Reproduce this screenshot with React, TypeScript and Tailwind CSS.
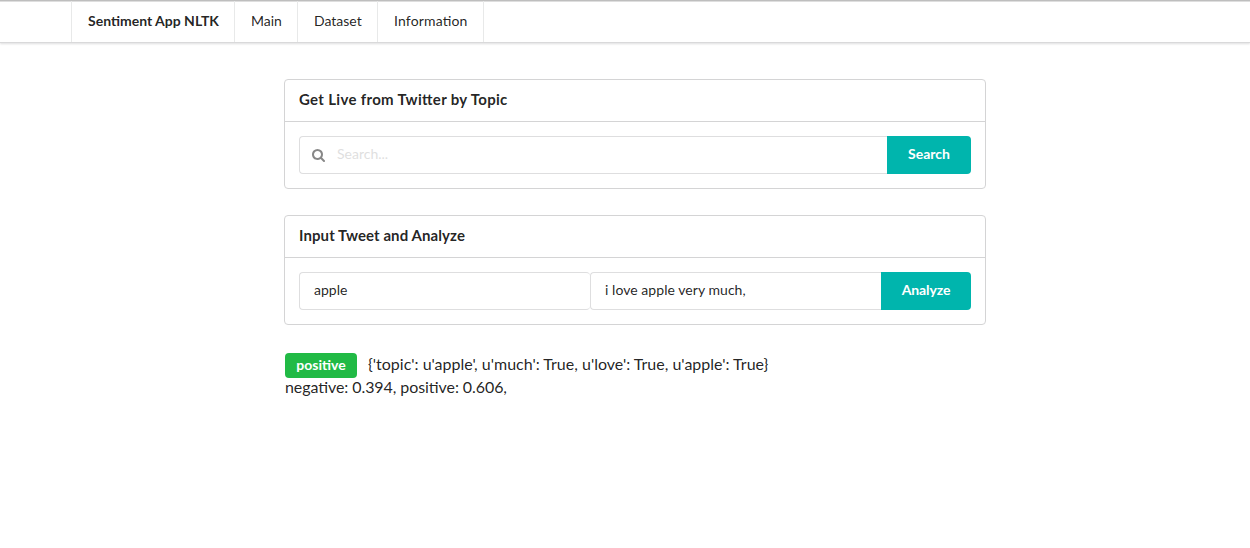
const items = [
  { label: "Main", box: "w-[63px]" },
  { label: "Dataset", box: "w-20" },
  { label: "Information", box: "w-[106px] tracking-[0.15px]" },
];

function SearchIcon() {
  return (
    <svg viewBox="0 128 1664 1664" className="size-[13px] shrink-0 fill-[#888]">
      <path d="M1152 832q0-185-131.5-316.5t-316.5-131.5-316.5 131.5-131.5 316.5 131.5 316.5 316.5 131.5 316.5-131.5 131.5-316.5zm512 832q0 52-38 90t-90 38q-54 0-90-38l-343-342q-179 124-399 124-143 0-273.5-55.5t-225-150-150-225-55.5-273.5 55.5-273.5 150-225 225-150 273.5-55.5 273.5 55.5 225 150 150 225 55.5 273.5q0 220-124 399l343 343q37 37 37 90z" />
    </svg>
  );
}

export default function App() {
  return (
    <div className="min-h-[548px] bg-white font-['Lato',sans-serif] text-[14px] text-[rgba(0,0,0,0.87)] [font-feature-settings:'liga'_1]">
      <nav className="flex h-[43px] border-t border-b border-t-[#bebebe] border-b-[#d9d9da] pl-[71px] shadow-[0_1px_2px_0_rgba(34,36,38,0.15),inset_0_1px_0_0_#dedede]">
        <div className="flex w-[164px] items-center whitespace-nowrap border-x border-[#e8e9e9] pb-0.5 pl-4 font-bold">Sentiment App NLTK</div>
        {items.map((item) => (
          <a key={item.label} className={`flex items-center border-r border-[#e8e9e9] pb-0.5 pl-4 ${item.box}`}>{item.label}</a>
        ))}
      </nav>
      <main className="ml-[284px] mt-9 w-[702px]">
        <section className="h-[110px] rounded border border-[#d4d4d5]">
          <h2 className="flex h-[42px] items-center border-b border-[#d4d4d5] px-[14px] pb-0.5 text-[15px] font-bold tracking-[0.32px]">Get Live from Twitter by Topic</h2>
          <div className="flex p-[14px]">
            <div className="flex h-[38px] flex-1 items-center rounded-l border border-r-0 border-[#dededf] pl-3">
              <SearchIcon />
              <span className="ml-3 pb-[3px] text-[#dfdfdf]">Search...</span>
            </div>
            <button className="h-[38px] w-[84px] rounded-r bg-[#00b5ad] pb-[3px] font-bold text-white">Search</button>
          </div>
        </section>
        <section className="mt-[26px] h-[110px] rounded border border-[#d4d4d5]">
          <h2 className="flex h-[42px] items-center border-b border-[#d4d4d5] px-[14px] pb-0.5 text-[15px] font-bold tracking-[0.09px]">Input Tweet and Analyze</h2>
          <div className="flex p-[14px]">
            <div className="flex h-[38px] flex-1 items-center rounded border border-r-0 border-[#dededf] pb-[3px] pl-[14px]">apple</div>
            <div className="flex h-[38px] flex-1 items-center rounded-l border border-r-0 border-[#dededf] pb-[3px] pl-[14px] tracking-[0.05px]">i love apple very much,</div>
            <button className="h-[38px] w-[90px] rounded-r bg-[#00b5ad] pb-[3px] font-bold tracking-[-0.1px] text-white">Analyze</button>
          </div>
        </section>
        <div className="ml-px mt-7 text-[16px]">
          <div className="flex h-[25px] items-center">
            <span className="flex h-[25px] w-[72px] items-center justify-center rounded bg-[#21ba45] pb-0.5 text-[14px] font-bold text-white">positive</span>
            <span className="ml-[11px] pb-[3px]">{"{'topic': u'apple', u'much': True, u'love': True, u'apple': True}"}</span>
          </div>
          <p className="-mt-px leading-[20px] tracking-[-0.08px]">negative: 0.394, positive: 0.606,</p>
        </div>
      </main>
    </div>
  );
}
